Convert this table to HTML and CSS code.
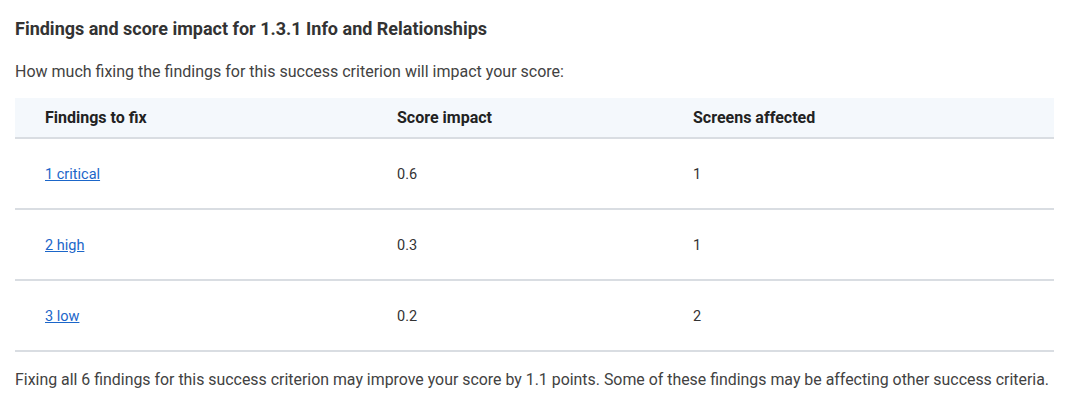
FILE: index.html
```html
<!DOCTYPE html>
<html lang="en">
<head>
<meta charset="utf-8">
<title>Findings and score impact</title>
<link rel="stylesheet" href="styles.css">
</head>
<body>
<section class="panel">
  <h2 class="title">Findings and score impact for 1.3.1 Info and Relationships</h2>
  <p class="intro">How much fixing the findings for this success criterion will impact your score:</p>
  <table class="impact">
    <colgroup>
      <col class="c1">
      <col class="c2">
      <col class="c3">
    </colgroup>
    <thead>
      <tr>
        <th>Findings to fix</th>
        <th>Score impact</th>
        <th>Screens affected</th>
      </tr>
    </thead>
    <tbody>
      <tr>
        <td><a href="#">1 critical</a></td>
        <td>0.6</td>
        <td>1</td>
      </tr>
      <tr>
        <td><a href="#">2 high</a></td>
        <td>0.3</td>
        <td>1</td>
      </tr>
      <tr>
        <td><a href="#">3 low</a></td>
        <td>0.2</td>
        <td>2</td>
      </tr>
    </tbody>
  </table>
  <p class="summary">Fixing all 6 findings for this success criterion may improve your score by 1.1 points. Some of these findings may be affecting other success criteria.</p>
</section>
</body>
</html>
```

FILE: styles.css
```css
html, body {
  margin: 0;
  padding: 0;
  background: #ffffff;
}

body {
  font-family: Roboto, "Liberation Sans", Arial, sans-serif;
  color: #333333;
}

.panel {
  padding: 19px 13px 0 15px;
}

.title {
  margin: 0;
  font-size: 18px;
  line-height: 20px;
  font-weight: 700;
  color: #333333;
}

.intro {
  margin: 23px 0 0;
  font-size: 16px;
  line-height: 20px;
  color: #424242;
}

.impact {
  margin-top: 16px;
  width: 100%;
  border-collapse: collapse;
  table-layout: fixed;
  font-size: 14.5px;
}

.c1 { width: 352px; }
.c2 { width: 296px; }

.impact th {
  background: #f4f8fc;
  text-align: left;
  font-size: 16px;
  font-weight: 700;
  color: #222222;
  height: 40px;
  padding: 0 0 0 30px;
  line-height: 20px;
  border-bottom: 2px solid #d9dde2;
  box-sizing: border-box;
}

.impact td {
  height: 71px;
  padding: 2px 0 0 30px;
  line-height: 20px;
  color: #333333;
  border-bottom: 2px solid #d9dde2;
  box-sizing: border-box;
  vertical-align: middle;
}

.impact a {
  color: #1b66c9;
  text-decoration: underline;
}

.summary {
  margin: 18px 0 0;
  font-size: 15.9px;
  line-height: 20px;
  color: #424242;
  white-space: nowrap;
}
```
